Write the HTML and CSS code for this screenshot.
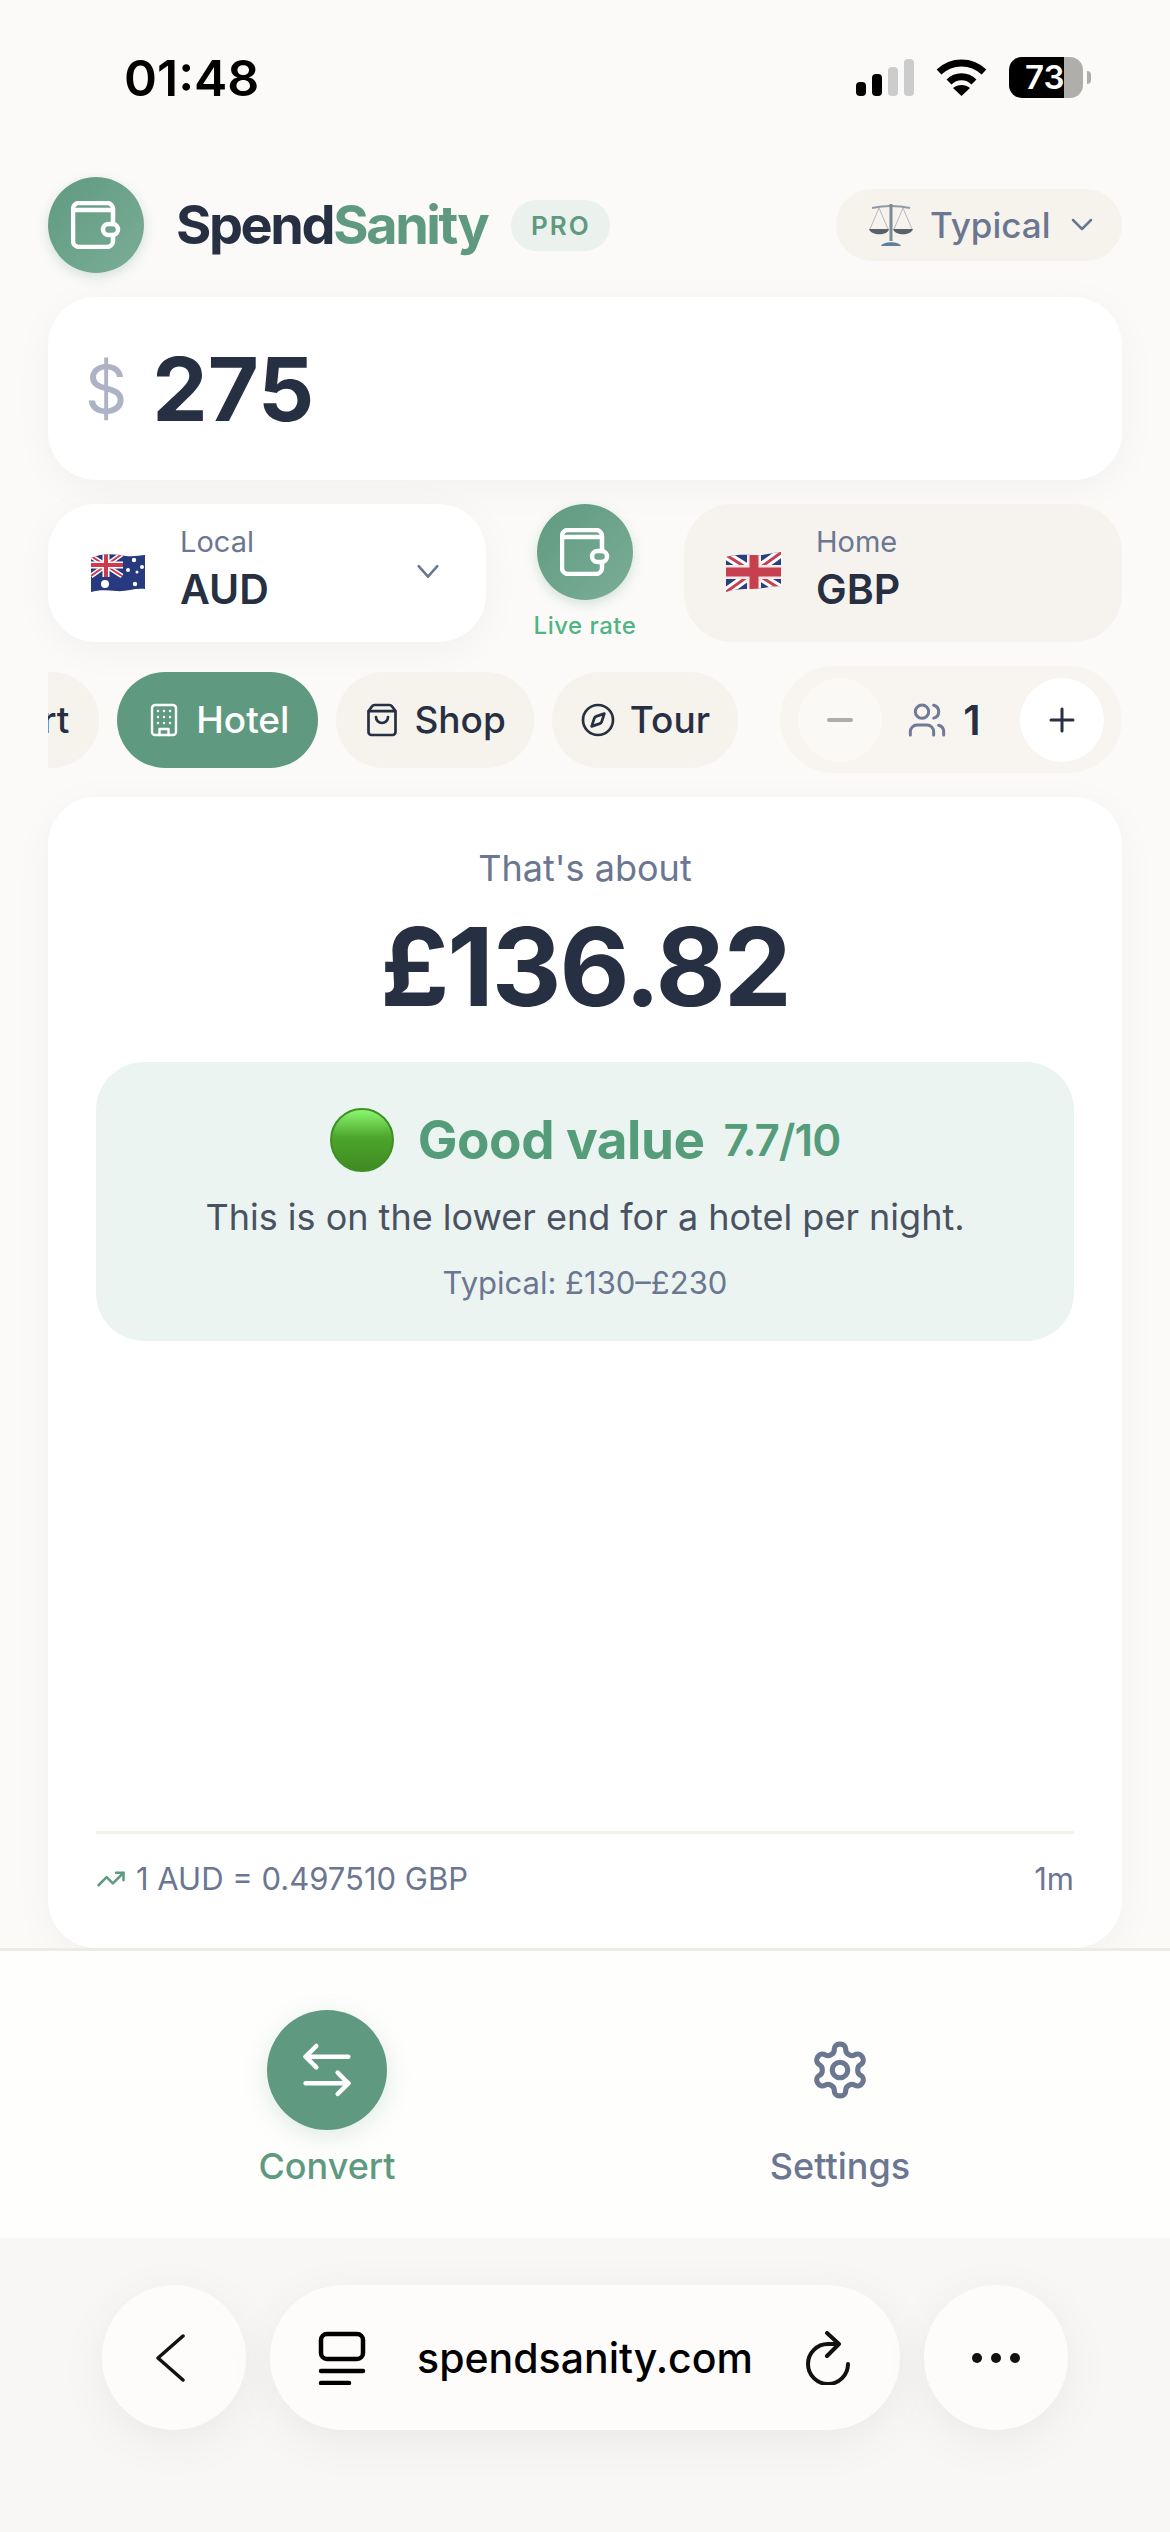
FILE: index.html
```html
<!DOCTYPE html>
<html lang="en">
<head>
    <meta charset="UTF-8">
    <meta name="viewport" content="width=device-width, initial-scale=1.0">
    <title>SpendSanity</title>
    <link rel="stylesheet" href="styles.css">
</head>
<body>
    <div class="app">
        <!-- phone status bar -->
        <div class="status-bar">
            <span class="time">01:48</span>
            <div class="status-icons">
                <svg class="signal" width="58" height="37" viewBox="0 0 58 37">
                    <rect x="0" y="23" width="10" height="14" rx="4" fill="#000"/>
                    <rect x="16" y="15" width="10" height="22" rx="4" fill="#000"/>
                    <rect x="32" y="8" width="10" height="29" rx="4" fill="#ccc"/>
                    <rect x="48" y="0" width="10" height="37" rx="4" fill="#ccc"/>
                </svg>
                <svg class="wifi" width="51" height="37" viewBox="0 0 51 37">
                    <path d="M3 13 C16 1 35 1 48 13" fill="none" stroke="#000" stroke-width="7"/>
                    <path d="M13 23 C20 16 31 16 38 23" fill="none" stroke="#000" stroke-width="7"/>
                    <path d="M25.500 37 L17 29 C22 25 29 25 34 29 Z" fill="#000"/>
                </svg>
                <div class="battery">
                    <div class="battery-body"><span>73</span></div>
                    <div class="battery-tip"></div>
                </div>
            </div>
        </div>

        <header class="top">
            <div class="logo-circle">
                <svg width="50" height="48" viewBox="0 0 50 48" fill="none" stroke="#fff" stroke-width="4.500" stroke-linecap="round" stroke-linejoin="round">
                    <path d="M42 23V8a6 6 0 0 0-6-6H8a6 6 0 0 0-6 6v32a6 6 0 0 0 6 6h28a6 6 0 0 0 6-6v-6"/>
                    <path d="M2 9h39"/>
                    <rect x="32" y="23" width="15" height="11" rx="5.500"/>
                </svg>
            </div>
            <div class="brand"><span class="brand-dark">Spend</span><span class="brand-green">Sanity</span></div>
            <span class="pro">PRO</span>
            <div class="mode-pill">
                <svg width="46" height="46" viewBox="0 0 46 46" fill="none">
                    <path d="M4 6 Q23 2 42 6" stroke="#8f9aa5" stroke-width="2"/>
                    <path d="M23 2 V39" stroke="#7d8a96" stroke-width="3"/>
                    <path d="M11 6 L2 27 M11 6 L20 27 M35 6 L26 27 M35 6 L44 27" stroke="#b4b9bf" stroke-width="1"/>
                    <path d="M1 27 H21 C20 34 3 34 1 27 Z M25 27 H45 C43 34 27 34 25 27 Z" fill="#59616b"/>
                    <path d="M13 44 C15 39 31 39 33 44 Z" fill="#5f7f9c"/>
                </svg>
                <span>Typical</span>
                <svg class="chev" width="24" height="24" viewBox="0 0 24 24" fill="none" stroke="#6b7691" stroke-width="2.500" stroke-linecap="round" stroke-linejoin="round"><path d="m3 7 9 9 9-9"/></svg>
            </div>
        </header>

        <main class="content">
            <div class="amount-card">
                <span class="dollar">$</span>
                <span class="amount">275</span>
            </div>

            <div class="currency-row">
                <div class="cur-card cur-local">
                    <svg class="flag" width="56" height="42" viewBox="0 0 56 42">
                        <defs>
                            <clipPath id="wave-au"><path d="M1 6 C14 0 28 3 36 4 C44 5 50 3 55 3 V37 C44 36 36 40 26 39 C16 38 8 38 1 40 Z"/></clipPath>
                        </defs>
                        <g clip-path="url(#wave-au)">
                            <rect width="56" height="42" fill="#27397f"/>
                            <path d="M1 4 L32 24 M32 2 L1 24" stroke="#fff" stroke-width="5"/>
                            <path d="M1 4 L32 24 M32 2 L1 24" stroke="#cf3a4c" stroke-width="2"/>
                            <path d="M16 0 V25 M0 13 H33" stroke="#fff" stroke-width="7"/>
                            <path d="M16 0 V25 M0 13 H33" stroke="#cf3a4c" stroke-width="4"/>
                        </g>
                        <circle cx="15" cy="32" r="4" fill="#fff"/>
                        <circle cx="44" cy="8" r="2.200" fill="#fff"/>
                        <circle cx="38" cy="18" r="2" fill="#fff"/>
                        <circle cx="52" cy="15" r="2" fill="#fff"/>
                        <circle cx="47" cy="20" r="1.500" fill="#fff"/>
                        <circle cx="45" cy="32" r="2.200" fill="#fff"/>
                    </svg>
                    <div class="cur-text">
                        <span class="cur-label">Local</span>
                        <span class="cur-code">AUD</span>
                    </div>
                    <svg class="cur-chev" width="28" height="28" viewBox="0 0 24 24" fill="none" stroke="#6b7691" stroke-width="2.200" stroke-linecap="round" stroke-linejoin="round"><path d="m4 7 8 9 8-9"/></svg>
                </div>

                <div class="live">
                    <div class="logo-circle">
                        <svg width="50" height="48" viewBox="0 0 50 48" fill="none" stroke="#fff" stroke-width="4.500" stroke-linecap="round" stroke-linejoin="round">
                            <path d="M42 23V8a6 6 0 0 0-6-6H8a6 6 0 0 0-6 6v32a6 6 0 0 0 6 6h28a6 6 0 0 0 6-6v-6"/>
                            <path d="M2 9h39"/>
                            <rect x="32" y="23" width="15" height="11" rx="5.500"/>
                        </svg>
                    </div>
                    <span class="live-label">Live rate</span>
                </div>

                <div class="cur-card cur-home">
                    <svg class="flag" width="56" height="42" viewBox="0 0 56 42">
                        <defs>
                            <clipPath id="wave-uk"><path d="M0 5 C14 1 28 4 36 3 C44 2 50 0 55 0 V34 C44 34 36 37 26 37 C16 37 8 37 0 40 Z"/></clipPath>
                        </defs>
                        <g clip-path="url(#wave-uk)">
                            <rect width="56" height="42" fill="#2a3f80"/>
                            <path d="M0 3 L56 38 M56 0 L0 40" stroke="#fff" stroke-width="9"/>
                            <path d="M0 3 L56 38 M56 0 L0 40" stroke="#c6404f" stroke-width="3"/>
                            <path d="M28 0 V42 M0 20 H56" stroke="#f7e9e7" stroke-width="14"/>
                            <path d="M28 0 V42 M0 20 H56" stroke="#c6404f" stroke-width="9"/>
                        </g>
                    </svg>
                    <div class="cur-text">
                        <span class="cur-label">Home</span>
                        <span class="cur-code">GBP</span>
                    </div>
                </div>
            </div>

            <div class="filter-row">
                <div class="cats">
                    <div class="cat cat-clipped">
                        <span>rt</span>
                    </div>
                    <div class="cat cat-active">
                        <svg width="36" height="36" viewBox="0 0 24 24" fill="none" stroke="currentColor" stroke-width="1.600" stroke-linecap="round" stroke-linejoin="round">
                            <rect x="4" y="2" width="16" height="20" rx="2"/>
                            <path d="M9 22v-4h6v4"/>
                            <path d="M8 6h.01M12 6h.01M16 6h.01M8 10h.01M12 10h.01M16 10h.01M8 14h.01M12 14h.01M16 14h.01"/>
                        </svg>
                        <span>Hotel</span>
                    </div>
                    <div class="cat">
                        <svg width="36" height="36" viewBox="0 0 24 24" fill="none" stroke="currentColor" stroke-width="1.800" stroke-linecap="round" stroke-linejoin="round">
                            <path d="M16 10a4 4 0 0 1-8 0"/>
                            <path d="M3.103 6.034h17.794"/>
                            <path d="M3.400 5.467a2 2 0 0 0-.4 1.200V20a2 2 0 0 0 2 2h14a2 2 0 0 0 2-2V6.667a2 2 0 0 0-.4-1.200l-2-2.667A2 2 0 0 0 17 2H7a2 2 0 0 0-1.600.8z"/>
                        </svg>
                        <span>Shop</span>
                    </div>
                    <div class="cat">
                        <svg width="36" height="36" viewBox="0 0 24 24" fill="none" stroke="currentColor" stroke-width="1.800" stroke-linecap="round" stroke-linejoin="round">
                            <circle cx="12" cy="12" r="10"/>
                            <path d="m16.240 7.760-1.804 5.411a2 2 0 0 1-1.265 1.265L7.760 16.240l1.804-5.411a2 2 0 0 1 1.265-1.265z"/>
                        </svg>
                        <span>Tour</span>
                    </div>
                </div>

                <div class="stepper">
                    <div class="step-btn step-minus">
                        <svg width="26" height="6" viewBox="0 0 26 6" stroke="#adadad" stroke-width="4" stroke-linecap="round"><path d="M2 3h22"/></svg>
                    </div>
                    <div class="step-count">
                        <svg width="40" height="40" viewBox="0 0 24 24" fill="none" stroke="#6f7a96" stroke-width="1.800" stroke-linecap="round" stroke-linejoin="round">
                            <path d="M16 21v-2a4 4 0 0 0-4-4H6a4 4 0 0 0-4 4v2"/>
                            <circle cx="9" cy="7" r="4"/>
                            <path d="M22 21v-2a4 4 0 0 0-3-3.870"/>
                            <path d="M16 3.130a4 4 0 0 1 0 7.750"/>
                        </svg>
                        <span>1</span>
                    </div>
                    <div class="step-btn step-plus">
                        <svg width="26" height="26" viewBox="0 0 26 26" stroke="#272f42" stroke-width="3" stroke-linecap="round"><path d="M2 13h22M13 2v22"/></svg>
                    </div>
                </div>
            </div>

            <section class="result">
                <p class="about">That's about</p>
                <p class="converted">£136.82</p>

                <div class="verdict">
                    <div class="verdict-head">
                        <svg width="64" height="64" viewBox="0 0 64 64">
                            <defs>
                                <linearGradient id="dot" x1="0" y1="0" x2="0" y2="1">
                                    <stop offset="0" stop-color="#8efb72"/>
                                    <stop offset="0.45" stop-color="#4da62c"/>
                                    <stop offset="1" stop-color="#3f8a22"/>
                                </linearGradient>
                            </defs>
                            <circle cx="32" cy="32" r="31" fill="url(#dot)" stroke="#3f8f24" stroke-width="2"/>
                        </svg>
                        <span class="verdict-title">Good value</span>
                        <span class="verdict-score">7.7/10</span>
                    </div>
                    <p class="verdict-text">This is on the lower end for a hotel per night.</p>
                    <p class="verdict-range">Typical: £130–£230</p>
                </div>

                <div class="rate-line">
                    <div class="rate-left">
                        <svg width="30" height="30" viewBox="0 0 24 24" fill="none" stroke="#5f9a80" stroke-width="2" stroke-linecap="round" stroke-linejoin="round">
                            <path d="M22 7 13.500 15.500 8.500 10.500 2 17"/>
                            <path d="M16 7h6v6"/>
                        </svg>
                        <span>1 AUD = 0.497510 GBP</span>
                    </div>
                    <span>1m</span>
                </div>
            </section>
        </main>

        <nav class="tabs">
            <div class="tab tab-on">
                <div class="tab-icon">
                    <svg width="64" height="64" viewBox="0 0 24 24" fill="none" stroke="#fff" stroke-width="1.700" stroke-linecap="round" stroke-linejoin="round">
                        <path d="M8 3 4 7l4 4"/>
                        <path d="M4 7h16"/>
                        <path d="m16 21 4-4-4-4"/>
                        <path d="M20 17H4"/>
                    </svg>
                </div>
                <span>Convert</span>
            </div>
            <div class="tab">
                <div class="tab-icon">
                    <svg width="62" height="62" viewBox="0 0 24 24" fill="none" stroke="#6b7691" stroke-width="2" stroke-linecap="round" stroke-linejoin="round">
                        <path d="M12.220 2h-.44a2 2 0 0 0-2 2v.18a2 2 0 0 1-1 1.730l-.43.25a2 2 0 0 1-2 0l-.15-.08a2 2 0 0 0-2.730.73l-.22.38a2 2 0 0 0 .73 2.730l.15.1a2 2 0 0 1 1 1.720v.51a2 2 0 0 1-1 1.740l-.15.09a2 2 0 0 0-.73 2.730l.22.38a2 2 0 0 0 2.730.73l.15-.08a2 2 0 0 1 2 0l.43.25a2 2 0 0 1 1 1.730V20a2 2 0 0 0 2 2h.44a2 2 0 0 0 2-2v-.18a2 2 0 0 1 1-1.730l.43-.25a2 2 0 0 1 2 0l.15.08a2 2 0 0 0 2.730-.73l.22-.39a2 2 0 0 0-.73-2.730l-.15-.08a2 2 0 0 1-1-1.740v-.5a2 2 0 0 1 1-1.740l.15-.09a2 2 0 0 0 .73-2.730l-.22-.38a2 2 0 0 0-2.730-.73l-.15.08a2 2 0 0 1-2 0l-.43-.25a2 2 0 0 1-1-1.730V4a2 2 0 0 0-2-2z"/>
                        <circle cx="12" cy="12" r="3"/>
                    </svg>
                </div>
                <span>Settings</span>
            </div>
        </nav>

        <!-- safari bottom bar -->
        <div class="browser">
            <div class="round-btn">
                <svg width="36" height="48" viewBox="0 0 36 48" fill="none" stroke="#111" stroke-width="3.500" stroke-linecap="round" stroke-linejoin="round"><path d="M27 2 2 24l25 22"/></svg>
            </div>
            <div class="url-pill">
                <svg width="48" height="54" viewBox="0 0 48 54" fill="none" stroke="#000" stroke-width="4.500" stroke-linecap="round" stroke-linejoin="round">
                    <rect x="3" y="3" width="42" height="25" rx="6"/>
                    <path d="M3 40h42M3 52h28"/>
                </svg>
                <span class="url">spendsanity.com</span>
                <svg width="48" height="54" viewBox="0 0 48 54" fill="none" stroke="#111" stroke-width="4" stroke-linecap="round" stroke-linejoin="round">
                    <path d="M34 13H24A20 20 0 1 0 44 33"/>
                    <path d="M23 2 35 13 23 25"/>
                </svg>
            </div>
            <div class="round-btn">
                <svg width="50" height="12" viewBox="0 0 50 12" fill="#111"><circle cx="6" cy="6" r="5"/><circle cx="25" cy="6" r="5"/><circle cx="44" cy="6" r="5"/></svg>
            </div>
        </div>
    </div>
</body>
</html>
```

FILE: styles.css
```css
* {
    box-sizing: border-box;
}
body {
    margin: 0;
    background: #fbfaf8;
    font-family: Inter, "Liberation Sans", sans-serif;
    color: #272f42;
}
p {
    margin: 0;
}
.app {
    width: 1170px;
    height: 2532px;
    display: flex;
    flex-direction: column;
    overflow: hidden;
}

/* status bar */
.status-bar {
    height: 177px;
    display: flex;
    justify-content: space-between;
    align-items: flex-start;
    padding: 50px 79px 0 124px;
}
.time {
    font-size: 50px;
    font-weight: 600;
    line-height: 56px;
    color: #000;
}
.status-icons {
    display: flex;
    align-items: center;
    gap: 22px;
    padding-top: 7px;
}
.battery {
    display: flex;
    align-items: center;
    gap: 4px;
}
.battery-body {
    width: 74px;
    height: 41px;
    border-radius: 13px;
    background: linear-gradient(90deg, #000 74%, #b0aeab 74%);
    color: #fff;
    font-size: 33px;
    font-weight: 600;
    line-height: 41px;
    padding-left: 16px;
}
.battery-tip {
    width: 4px;
    height: 13px;
    background: #b0aeab;
    border-radius: 0 4px 4px 0;
}

/* header */
.top {
    height: 120px;
    flex-shrink: 0;
    display: flex;
    align-items: flex-start;
    padding: 0 48px;
}
.logo-circle {
    width: 96px;
    height: 96px;
    border-radius: 50%;
    background: linear-gradient(135deg, #5f9a80, #7cad97);
    box-shadow: 0 4px 12px rgba(95, 154, 128, 0.25);
    display: flex;
    align-items: center;
    justify-content: center;
    flex-shrink: 0;
}
.brand {
    font-size: 54px;
    font-weight: 700;
    letter-spacing: -2.400px;
    margin-left: 32px;
    line-height: 96px;
}
.brand-green {
    color: #5f9a80;
}
.pro {
    margin: 23px 0 0 24px;
    height: 51px;
    width: 99px;
    border-radius: 26px;
    background: #ebf1ed;
    color: #5f9a80;
    font-size: 26px;
    font-weight: 600;
    letter-spacing: 2px;
    line-height: 51px;
    text-align: center;
}
.mode-pill {
    margin: 12px 0 0 auto;
    height: 72px;
    width: 286px;
    border-radius: 36px;
    background: #f6f3ed;
    color: #6b7691;
    display: flex;
    align-items: center;
    padding-left: 32px;
    font-size: 35px;
    font-weight: 500;
}
.mode-pill span {
    margin-left: 16px;
}
.mode-pill .chev {
    margin-left: 20px;
}

/* main column */
.content {
    padding: 0 48px;
    display: flex;
    flex-direction: column;
    height: 1651px;
    flex-shrink: 0;
}
.amount-card {
    height: 183px;
    flex-shrink: 0;
    background: #fff;
    border-radius: 48px;
    box-shadow: 0 8px 40px rgba(0, 0, 0, 0.04);
    display: flex;
    align-items: center;
    padding: 0 37px;
    gap: 25px;
}
.dollar {
    font-size: 66px;
    color: #adb3c4;
}
.amount {
    font-size: 88px;
    font-weight: 700;
}

.currency-row {
    display: flex;
    margin-top: 24px;
    height: 138px;
    flex-shrink: 0;
    justify-content: space-between;
}
.cur-card {
    width: 438px;
    border-radius: 48px;
    display: flex;
    align-items: center;
    padding: 0 44px 0 42px;
}
.cur-local {
    background: #fff;
    box-shadow: 0 8px 40px rgba(0, 0, 0, 0.04);
}
.cur-home {
    background: #f6f3ee;
}
.flag {
    flex-shrink: 0;
}
.cur-text {
    display: flex;
    flex-direction: column;
    margin-left: 34px;
    padding-bottom: 6px;
    flex: 1;
}
.cur-label {
    font-size: 29px;
    color: #6b7691;
    line-height: 38px;
}
.cur-code {
    font-size: 41px;
    font-weight: 600;
    line-height: 56px;
}
.cur-chev {
    margin-bottom: 2px;
}
.live {
    display: flex;
    flex-direction: column;
    align-items: center;
}
.live-label {
    font-size: 24px;
    font-weight: 500;
    color: #4fb583;
    margin-top: 11px;
    letter-spacing: 0.5px;
}

.filter-row {
    display: flex;
    align-items: center;
    margin-top: 24px;
    height: 107px;
    flex-shrink: 0;
    gap: 42px;
}
.cats {
    flex: 1;
    min-width: 0;
    display: flex;
    justify-content: flex-end;
    gap: 18px;
    overflow: hidden;
}
.cat {
    flex-shrink: 0;
    height: 96px;
    border-radius: 48px;
    background: #f6f2ec;
    display: flex;
    align-items: center;
    gap: 14px;
    padding: 0 28px;
    font-size: 37px;
    font-weight: 500;
}
.cat-clipped {
    width: 130px;
    padding: 0 30px 0 0;
    justify-content: flex-end;
}
.cat-active {
    background: #5f9a80;
    color: #fff;
    padding: 0 29px;
}
.stepper {
    width: 342px;
    height: 107px;
    border-radius: 54px;
    background: #f8f5f0;
    display: flex;
    align-items: center;
    justify-content: space-between;
    padding: 0 18px;
}
.step-btn {
    width: 84px;
    height: 84px;
    border-radius: 50%;
    display: flex;
    align-items: center;
    justify-content: center;
}
.step-minus {
    background: #fbf9f6;
}
.step-plus {
    background: #fff;
}
.step-count {
    display: flex;
    align-items: center;
    gap: 16px;
    padding-right: 14px;
    font-size: 41px;
    font-weight: 600;
}

/* result card */
.result {
    margin-top: 24px;
    height: 1151px;
    background: #fff;
    border-radius: 48px;
    box-shadow: 0 8px 40px rgba(0, 0, 0, 0.04);
    padding: 48px 48px 0;
    display: flex;
    flex-direction: column;
    flex-shrink: 0;
}
.about {
    text-align: center;
    font-size: 36px;
    line-height: 46px;
    color: #6b7691;
}
.converted {
    text-align: center;
    font-size: 108px;
    font-weight: 700;
    letter-spacing: -2px;
    line-height: 124px;
    margin-top: 14px;
}
.verdict {
    margin-top: 33px;
    height: 279px;
    flex-shrink: 0;
    border-radius: 48px;
    background: #ecf4f1;
    padding-top: 46px;
    text-align: center;
}
.verdict-head {
    display: flex;
    align-items: center;
    justify-content: center;
    gap: 24px;
}
.verdict-title {
    font-size: 53px;
    font-weight: 700;
    color: #559c7a;
    letter-spacing: -0.5px;
}
.verdict-score {
    font-size: 44px;
    font-weight: 600;
    color: #559c7a;
    margin-left: -5px;
    letter-spacing: -1px;
}
.verdict-text {
    font-size: 36px;
    color: #4a5262;
    margin-top: 23px;
    line-height: 44px;
}
.verdict-range {
    font-size: 31px;
    color: #6b7691;
    margin-top: 25px;
    line-height: 38px;
}
.rate-line {
    margin-top: auto;
    border-top: 3px solid #f3f2ed;
    padding-top: 26px;
    height: 117px;
    display: flex;
    justify-content: space-between;
    align-items: flex-start;
    font-size: 31px;
    color: #6b7691;
}
.rate-left {
    display: flex;
    align-items: center;
    gap: 10px;
}

/* bottom nav */
.tabs {
    height: 290px;
    background: #fefefd;
    border-top: 3px solid #ecebe6;
    display: flex;
    padding: 59px 0 0 177px;
    gap: 213px;
    flex-shrink: 0;
}
.tab {
    width: 300px;
    display: flex;
    flex-direction: column;
    align-items: center;
    font-size: 36px;
    font-weight: 500;
    color: #6b7691;
}
.tab-icon {
    width: 120px;
    height: 120px;
    border-radius: 50%;
    display: flex;
    align-items: center;
    justify-content: center;
    margin-bottom: 14px;
}
.tab-on {
    color: #5f9a80;
}
.tab-on .tab-icon {
    background: #5f9a80;
    box-shadow: 0 6px 24px rgba(95, 154, 128, 0.2);
}

/* browser bar */
.browser {
    flex: 1;
    background: #f8f7f5;
    display: flex;
    justify-content: center;
    gap: 24px;
    padding-top: 47px;
}
.round-btn {
    width: 144px;
    height: 145px;
    border-radius: 50%;
    background: #fdfcfa;
    box-shadow: 0 12px 50px rgba(0, 0, 0, 0.06);
    display: flex;
    align-items: center;
    justify-content: center;
}
.url-pill {
    width: 630px;
    height: 145px;
    border-radius: 73px;
    background: #fdfcfa;
    box-shadow: 0 12px 50px rgba(0, 0, 0, 0.06);
    display: flex;
    align-items: center;
    padding: 0 48px 0 48px;
    justify-content: space-between;
}
.url {
    font-size: 41px;
    font-weight: 500;
    color: #000;
}
```
